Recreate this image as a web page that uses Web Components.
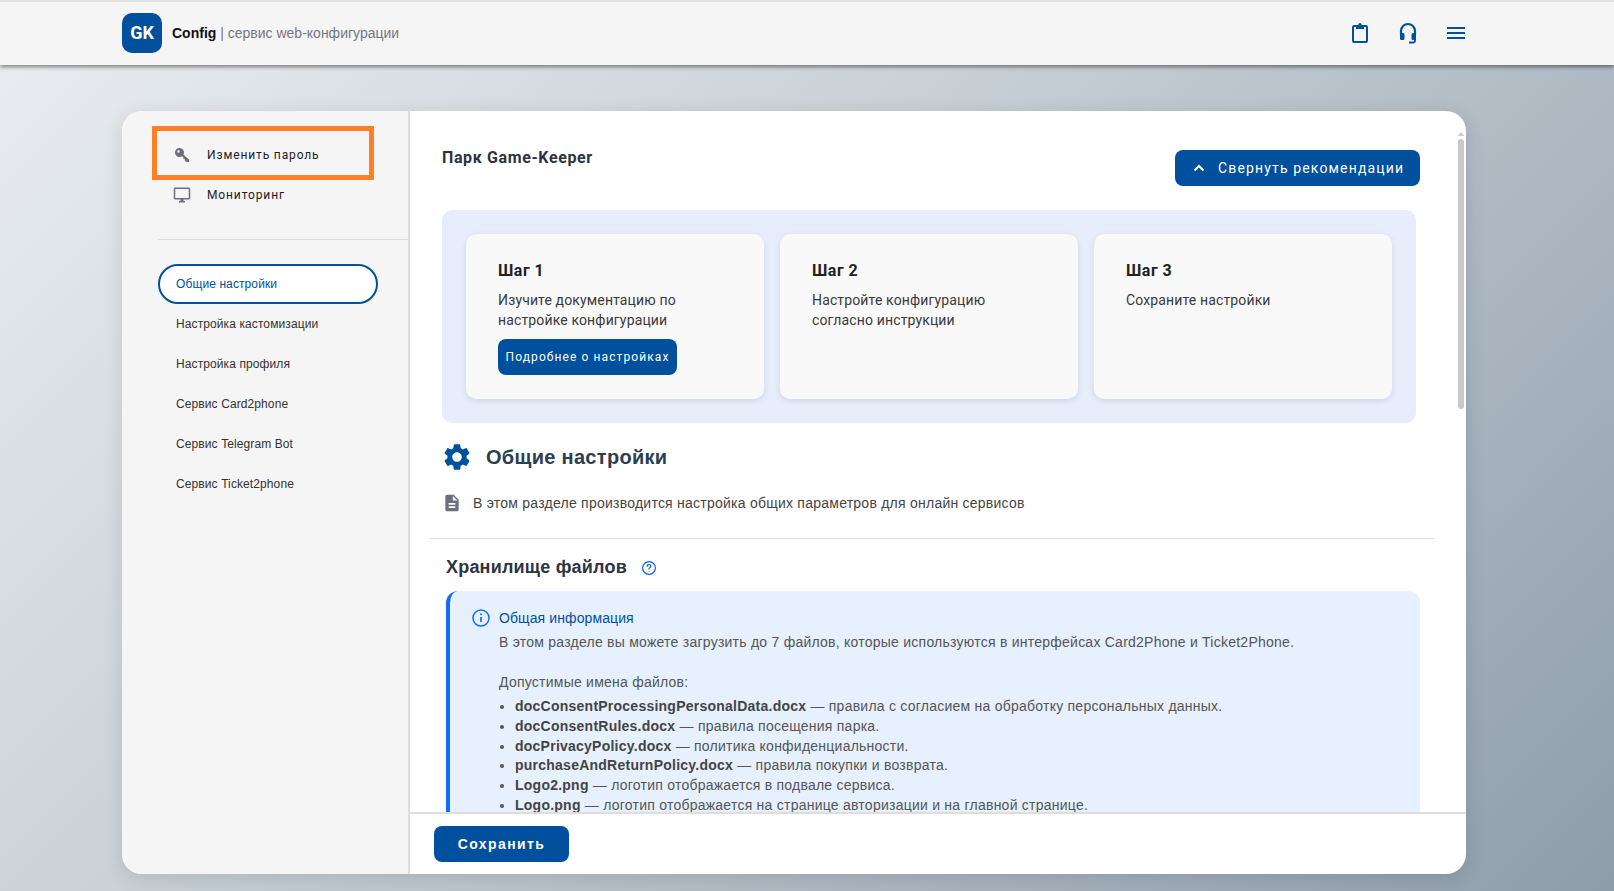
<!DOCTYPE html>
<html lang="ru"><head><meta charset="utf-8">
<style>
html,body{margin:0;height:100%;overflow:hidden}
body{font-family:"Liberation Sans",Arial,sans-serif;background:linear-gradient(135deg,#ebeef1 0%,#c9d1d7 40%,#8f9dab 100%);height:891px;display:flex;flex-direction:column}
gk-panel{flex:1;min-height:0}
</style></head><body>
<template id="t-header"><style>
:host{display:flex;align-items:center;height:61px;border-top:2px solid #e0e0e0;background:#f5f5f5;box-shadow:0 2px 4px rgba(0,0,0,.45);padding:0 146px 2px 122px;position:relative;z-index:2;flex:none;box-sizing:content-box}
.logo{width:40px;height:40px;border-radius:10px;background:#00509e;color:#fff;font:700 18px "Roboto","Liberation Sans",sans-serif;display:flex;align-items:center;justify-content:center}
.t{margin-left:10px;font-size:14px;color:#76767f}.t b{color:#111}
.r{margin-left:auto;display:flex;gap:24px}
svg{width:24px;height:24px;fill:#00509e;display:block}
</style><div class="logo">GK</div><div class="t"><b>Config</b> | сервис web-конфигурации</div>
<div class="r">
<svg viewBox="0 0 24 24"><rect x="5" y="5" width="14" height="16" rx="1.200" fill="none" stroke="#00509e" stroke-width="2"/><path d="M8 4h2.200c.2-1.200 1-2 1.800-2s1.600.8 1.800 2H16v4H8z"/></svg>
<svg viewBox="0 0 24 24"><path d="M5 14v-4a7 7 0 0 1 14 0v4" fill="none" stroke="#00509e" stroke-width="2.200"/><rect x="4" y="12" width="4.500" height="7" rx="1.500"/><rect x="15.500" y="12" width="4.500" height="7" rx="1.500"/><path d="M19 18v2a1.500 1.500 0 0 1-1.500 1.500H13" fill="none" stroke="#00509e" stroke-width="1.800"/></svg>
<svg viewBox="0 0 24 24"><path d="M3 18h18v-2H3v2zm0-5h18v-2H3v2zm0-7v2h18V6H3z"/></svg>
</div></template>

<template id="t-panel"><style>
:host{display:flex;margin:46px 148px 17px 122px;background:#fff;border-radius:20px;overflow:hidden;box-shadow:0 4px 20px rgba(0,0,0,.12);position:relative}
.side{width:286px;flex:none;background:#f5f5f5;border-right:2px solid #ddd;padding-top:15px;box-sizing:content-box}
.main{flex:1;display:flex;flex-direction:column;min-width:0;position:relative}
.scroll{flex:1;min-height:0;overflow:hidden;position:relative}
.foot{flex:none;border-top:2px solid #ddd;display:flex;align-items:center;padding-left:24px;padding-bottom:1px;box-sizing:border-box;height:62px}
</style><div class="side"><slot name="side"></slot></div>
<div class="main"><div class="scroll"><slot></slot></div><div class="foot"><slot name="foot"></slot></div>
<slot name="bar"></slot></div></template>

<template id="t-side"><style>
:host{display:block}
.a{display:flex;align-items:center;margin-left:30px;width:222px;height:54px;box-sizing:border-box;border:5px solid #ff7f27;padding:4px 0 0 18px}
.b{display:flex;align-items:center;margin-left:51px;height:30px}
.a,.b{font:12px "Roboto","Liberation Sans",sans-serif;letter-spacing:.87px;color:#1c1c28}
svg{fill:#6e6e7e;flex:none}
.a svg{width:14px;height:14px;margin-right:18px}
.b svg{width:18px;height:18px;margin-right:16px}
hr{border:0;height:1px;background:#ddd;margin:29px 0 24px 36px}
</style>
<div class="a"><svg viewBox="0 0 14 14"><path fill-rule="evenodd" d="M4.500 0a4.500 4.500 0 1 1 0 9a4.500 4.500 0 0 1 0-9zM3.500 2.200a1.300 1.300 0 1 0 0 2.600a1.300 1.300 0 0 0 0-2.600z"/><path d="M7 5.400l7 6.100v2.500h-2.800L9.800 12.300V11H8.400V9.600L5.400 7z"/></svg>Изменить пароль</div>
<div class="b"><svg viewBox="0 0 24 24"><path d="M21 2H3c-1.100 0-2 .9-2 2v12c0 1.100.9 2 2 2h7v2H8v2h8v-2h-2v-2h7c1.100 0 2-.9 2-2V4c0-1.100-.9-2-2-2zm0 14H3V4h18v12z"/></svg>Мониторинг</div>
<hr><slot></slot></template>

<template id="t-nav"><style>
:host{display:flex;align-items:center;height:40px;margin-left:36px;width:220px;box-sizing:border-box;padding-left:18px;font-size:12px;letter-spacing:.1px;color:#333}
:host([active]){border:2px solid #00509e;border-radius:20px;background:#fff;color:#00509e;padding-left:16px}
</style><slot></slot></template>

<template id="t-card"><style>
:host{display:block;background:#f9f9f9;border-radius:10px;box-shadow:0 2px 6px rgba(0,0,0,.1);padding:27px 32px 0;height:165px;box-sizing:border-box;font:14px/20px Roboto,sans-serif;letter-spacing:.14px;color:#3a3a3a}
h3{font:700 16px/20px Roboto,sans-serif;letter-spacing:.5px;margin:0 0 9px;color:#222}
p{margin:0 20px 9px 0}
</style><h3><slot name="h"></slot></h3><p><slot></slot></p><slot name="act"></slot></template>

<template id="t-btn"><style>
:host{display:inline-flex;align-items:center;justify-content:center;height:36px;background:#00509e;color:#fff;border-radius:8px;font:400 14px "Roboto",sans-serif;letter-spacing:1.100px;box-sizing:border-box;white-space:nowrap}
</style><slot></slot></template>

<template id="t-content"><style>
:host{display:block;padding:0 46px 0 32px;color:#333}
.top{display:flex;justify-content:space-between;padding-top:36px;height:99px;box-sizing:border-box}
.top h2{font:700 16px/22px Roboto,sans-serif;letter-spacing:.62px;color:#2c3440;margin:0}
.top gk-btn{width:245px;margin-top:3px;justify-content:flex-start;letter-spacing:1.150px}
svg.ch{width:12px;height:8px;margin:0 13px 0 18px;fill:none;stroke:#fff;stroke-width:2.200}
.rec{background:#e8edfc;border-radius:10px;padding:24px;height:213px;box-sizing:border-box;display:grid;grid-template-columns:repeat(3,1fr);gap:16px;width:974px}
.h{display:flex;align-items:center;height:46px;margin-top:11px;font:700 20px "Liberation Sans",sans-serif;letter-spacing:.3px;color:#2c3e50}
.h svg{width:32px;height:32px;fill:#00509e;margin:0 13px 0 -1px}
.d{display:flex;align-items:center;font-size:14px;letter-spacing:.24px;color:#444;margin-top:13px;height:20px}
.d svg{width:20px;height:20px;fill:#6e6e7e;margin:0 11.500px 0 -.5px}
hr{border:0;height:1px;background:#ddd;margin:25px -15px 0 -13px}
.s{display:flex;align-items:center;margin-top:17px;height:22px;padding-left:4px;font:700 18px "Liberation Sans",sans-serif;letter-spacing:.2px;color:#2c3440}
.s svg{width:16px;height:16px;margin-left:14px;margin-top:2px}
.box{margin:13px 0 0 4px;width:974px;box-sizing:border-box;border-left:4px solid #0d6efd;border-radius:12px 12px 0 0;background:#e6f0fe;padding:15px 0 0 49px;height:260px;font-size:14px;letter-spacing:.24px;line-height:20px;color:#555;position:relative}
.box svg{position:absolute;left:21px;top:17px;width:20px;height:20px}
.t{color:#00509e;height:26px;line-height:24px;letter-spacing:.1px}
ul{margin:5px 0 0;padding:0 0 0 16px;list-style:disc;line-height:19.800px}
b{color:#444}
p{margin:0}
</style>
<div class="top"><h2>Парк Game-Keeper</h2><gk-btn><svg class="ch" viewBox="0 0 12 8"><path d="M1.500 6.500L6 2l4.500 4.500"/></svg>Свернуть рекомендации</gk-btn></div>
<div class="rec">
<gk-card><span slot="h">Шаг 1</span>Изучите документацию по настройке конфигурации<gk-btn slot="act" style="width:179px;font-size:12px">Подробнее о настройках</gk-btn></gk-card>
<gk-card><span slot="h">Шаг 2</span>Настройте конфигурацию согласно инструкции</gk-card>
<gk-card><span slot="h">Шаг 3</span>Сохраните настройки</gk-card>
</div>
<div class="h"><svg viewBox="0 0 24 24"><path d="M19.140 12.940c.04-.3.060-.61.060-.94 0-.32-.02-.64-.07-.94l2.030-1.580c.18-.14.230-.41.120-.61l-1.920-3.320c-.12-.22-.37-.29-.59-.22l-2.390.96c-.5-.38-1.030-.7-1.620-.94l-.36-2.540c-.04-.24-.24-.41-.48-.41h-3.840c-.24 0-.43.170-.47.410l-.36 2.540c-.59.240-1.130.570-1.620.94l-2.390-.96c-.22-.08-.47 0-.59.220L2.740 8.870c-.12.210-.08.470.12.610l2.030 1.580c-.05.3-.09.630-.09.940s.02.640.07.940l-2.030 1.580c-.18.140-.23.410-.12.610l1.920 3.320c.12.220.37.290.59.220l2.390-.96c.5.380 1.030.7 1.620.94l.36 2.540c.05.240.24.410.48.410h3.840c.24 0 .44-.17.47-.41l.36-2.540c.59-.24 1.130-.56 1.620-.94l2.390.96c.22.080.47 0 .59-.22l1.920-3.320c.12-.22.07-.47-.12-.61l-2.010-1.580zM12 15.600c-1.980 0-3.600-1.620-3.600-3.600s1.620-3.600 3.600-3.600 3.600 1.620 3.600 3.600-1.620 3.600-3.600 3.600z"/></svg>Общие настройки</div>
<div class="d"><svg viewBox="0 0 24 24"><path d="M14 2H6c-1.100 0-2 .9-2 2v16c0 1.100.9 2 2 2h12c1.100 0 2-.9 2-2V8l-6-6zm2 16H8v-2h8v2zm0-4H8v-2h8v2zm-3-5V3.500L18.500 9H13z"/></svg>В этом разделе производится настройка общих параметров для онлайн сервисов</div>
<hr>
<div class="s">Хранилище файлов<svg viewBox="0 0 16 16" fill="none" stroke="#0d5fd8" stroke-width="1.200"><circle cx="8" cy="8" r="6.400"/><path d="M6.200 6.300c0-1 .8-1.600 1.800-1.600s1.800.6 1.800 1.500c0 1.300-1.800 1.300-1.800 2.700" stroke-linecap="round"/><circle cx="8" cy="11.200" r=".5" fill="#0d5fd8" stroke="none"/></svg></div>
<div class="box"><svg viewBox="0 0 20 20" fill="none" stroke="#0d6efd" stroke-width="1.500"><circle cx="10" cy="10" r="8"/><path d="M10 9v5" stroke-width="1.700"/><circle cx="10" cy="6.200" r="1" fill="#0d6efd" stroke="none"/></svg>
<div class="t">Общая информация</div>
<p>В этом разделе вы можете загрузить до 7 файлов, которые используются в интерфейсах Card2Phone и Ticket2Phone.</p><p>&nbsp;</p>
<p>Допустимые имена файлов:</p>
<ul><li><b>docConsentProcessingPersonalData.docx</b> — правила с согласием на обработку персональных данных.</li>
<li><b>docConsentRules.docx</b> — правила посещения парка.</li>
<li><b>docPrivacyPolicy.docx</b> — политика конфиденциальности.</li>
<li><b>purchaseAndReturnPolicy.docx</b> — правила покупки и возврата.</li>
<li><b>Logo2.png</b> — логотип отображается в подвале сервиса.</li>
<li><b>Logo.png</b> — логотип отображается на странице авторизации и на главной странице.</li></ul></div>
</template>

<template id="t-bar"><style>
:host{position:absolute;right:2px;top:21px;width:6px;height:278px;display:block}
.u{width:0;height:0;border:3px solid transparent;border-top:0;border-bottom:4px solid #c8c8c8}
.th{margin-top:3px;height:270px;border-radius:3px;background:#c8c8c8}
</style><div class="u"></div><div class="th"></div></template>

<gk-header></gk-header>
<gk-panel>
<gk-side slot="side">
<gk-nav active>Общие настройки</gk-nav><gk-nav>Настройка кастомизации</gk-nav><gk-nav>Настройка профиля</gk-nav><gk-nav>Сервис Card2phone</gk-nav><gk-nav>Сервис Telegram Bot</gk-nav><gk-nav>Сервис Ticket2phone</gk-nav>
</gk-side>
<gk-content></gk-content>
<gk-btn slot="foot" style="width:135px;font:700 14px 'Liberation Sans',sans-serif;letter-spacing:1.400px">Сохранить</gk-btn>
<gk-bar slot="bar"></gk-bar>
</gk-panel>
<script>
for (const [tag,id] of [['gk-header','t-header'],['gk-panel','t-panel'],['gk-side','t-side'],['gk-nav','t-nav'],['gk-card','t-card'],['gk-btn','t-btn'],['gk-content','t-content'],['gk-bar','t-bar']]) {
  customElements.define(tag,class extends HTMLElement{constructor(){super();this.attachShadow({mode:'open'}).appendChild(document.getElementById(id).content.cloneNode(true));}});
}
</script>
</body></html>
